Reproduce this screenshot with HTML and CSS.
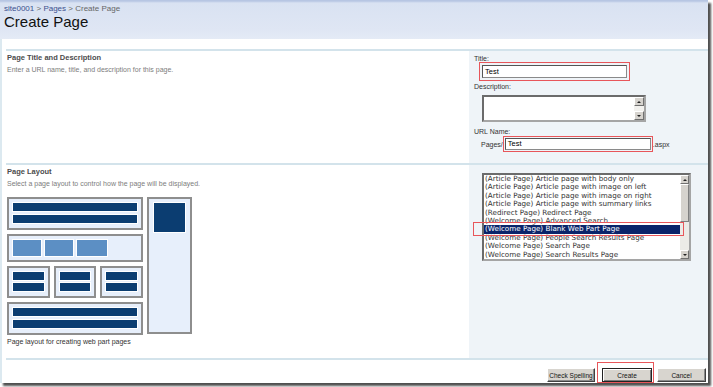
FILE: index.html
```html
<!DOCTYPE html>
<html lang="en">
<head>
    <meta charset="UTF-8">
    <title>Create Page</title>
    <link rel="stylesheet" href="styles.css">
</head>
<body>
    <div class="frame">
        <div class="header">
            <div class="crumbs"><a href="#">site0001</a> &gt; <a href="#">Pages</a> &gt; <span>Create Page</span></div>
            <h1>Create Page</h1>
        </div>

        <div class="main">
            <div class="section sec-title">
                <div class="sec-info">
                    <h2>Page Title and Description</h2>
                    <p>Enter a URL name, title, and description for this page.</p>
                </div>
                <div class="sec-fields">
                    <label class="fl">Title:</label>
                    <div class="redbox title-box"><div class="textbox">Test</div></div>

                    <label class="fl desc-label">Description:</label>
                    <div class="textarea">
                        <div class="ta-body"></div>
                        <div class="ta-scroll">
                            <span class="sbtn"><i class="arr up"></i></span>
                            <span class="sbtn"><i class="arr down"></i></span>
                        </div>
                    </div>

                    <label class="fl url-label">URL Name:</label>
                    <div class="url-row">
                        <span>Pages/</span>
                        <div class="redbox url-box"><div class="textbox small">Test</div></div>
                        <span>.aspx</span>
                    </div>
                </div>
            </div>

            <div class="section sec-layout">
                <div class="sec-info">
                    <h2>Page Layout</h2>
                    <p>Select a page layout to control how the page will be displayed.</p>

                    <div class="preview">
                        <div class="pv-main">
                            <div class="blk blk-a">
                                <div class="bar"></div>
                                <div class="bar"></div>
                            </div>
                            <div class="blk blk-b">
                                <div class="tile"></div>
                                <div class="tile"></div>
                                <div class="tile wide"></div>
                            </div>
                            <div class="blk-row">
                                <div class="blk small"><div class="bar"></div><div class="bar"></div></div>
                                <div class="blk small"><div class="bar"></div><div class="bar"></div></div>
                                <div class="blk small"><div class="bar"></div><div class="bar"></div></div>
                            </div>
                            <div class="blk blk-a">
                                <div class="bar"></div>
                                <div class="bar"></div>
                            </div>
                        </div>
                        <div class="blk pv-side">
                            <div class="square"></div>
                        </div>
                    </div>
                    <p class="caption">Page layout for creating web part pages</p>
                </div>
                <div class="sec-fields">
                    <div class="listwrap">
                        <div class="listbox">
                            <ul class="items">
                                <li>(Article Page) Article page with body only</li>
                                <li>(Article Page) Article page with image on left</li>
                                <li>(Article Page) Article page with image on right</li>
                                <li>(Article Page) Article page with summary links</li>
                                <li>(Redirect Page) Redirect Page</li>
                                <li>(Welcome Page) Advanced Search</li>
                                <li class="selected">(Welcome Page) Blank Web Part Page</li>
                                <li>(Welcome Page) People Search Results Page</li>
                                <li>(Welcome Page) Search Page</li>
                                <li>(Welcome Page) Search Results Page</li>
                            </ul>
                            <div class="lb-scroll">
                                <span class="sbtn"><i class="arr up"></i></span>
                                <span class="thumb"></span>
                                <span class="track"></span>
                                <span class="sbtn"><i class="arr down"></i></span>
                            </div>
                        </div>
                        <div class="mark"></div>
                    </div>
                </div>
            </div>

            <div class="actions">
                <button class="btn spell">Check Spelling</button>
                <div class="redbox create-box"><button class="btn default">Create</button></div>
                <button class="btn cancel">Cancel</button>
            </div>
        </div>
    </div>
</body>
</html>
```

FILE: styles.css
```css
:root {
    --line-color: #d3e3eb;
    --panel-color: #eff4f8;
    --mark-color: #e8565a;
    --navy: #0b3d71;
    --text-color: #333;
}

* {
    box-sizing: border-box;
    margin: 0;
    padding: 0;
}

body {
    font-family: 'Liberation Sans', Arial, sans-serif;
    background-color: #fff;
    width: 713px;
    height: 387px;
    overflow: hidden;
}

.frame {
    width: 708px;
    height: 383px;
    background-color: #fff;
    box-shadow: 3px 3px 2px #505050;
    display: flex;
    flex-direction: column;
}

/* header */
.header {
    height: 40px;
    padding: 4px 0 0 4px;
    background: linear-gradient(#b7c6e3 0, #b7c6e3 1px, #d9e2f2 3px, #dfe6f4 30px, #e5ebf6 40px);
}

.crumbs {
    font-size: 8px;
    line-height: 10px;
    color: #666;
}

.crumbs a {
    color: #3a4f8e;
    text-decoration: none;
}

.header h1 {
    font-size: 15px;
    line-height: 15px;
    font-weight: normal;
    color: #111;
}

/* content */
.main {
    flex: 1;
    display: flex;
    flex-direction: column;
    border-left: 2px solid #dce9f0;
    padding: 10px 0 0 4px;
}

.section {
    display: flex;
    border-top: 2px solid var(--line-color);
}

.sec-title {
    height: 114px;
}

.sec-layout {
    height: 195px;
}

.sec-info {
    width: 463px;
    padding: 2px 0 0 1px;
}

.sec-info h2 {
    font-size: 7.5px;
    line-height: 10px;
    font-weight: bold;
    color: #4c4c4c;
}

.sec-info p {
    font-size: 7px;
    line-height: 10px;
    margin-top: 2px;
    color: #7d7d7d;
}

.sec-fields {
    width: 239px;
    background-color: var(--panel-color);
    padding: 4px 0 0 5px;
}

.fl {
    display: block;
    font-size: 7px;
    line-height: 8px;
    color: var(--text-color);
}

.redbox {
    border: 1px solid var(--mark-color);
}

.title-box {
    width: 151px;
    padding: 2px;
    margin: -1px 0 0 5px;
}

.textbox {
    height: 13px;
    border: 1px solid #8a8a8a;
    border-top-color: #555;
    border-left-color: #555;
    background-color: #fff;
    font-size: 7.5px;
    line-height: 11px;
    padding-left: 2px;
    color: #000;
}

.textbox.small {
    height: 12px;
    line-height: 10px;
}

.desc-label {
    margin-top: 2px;
}

.textarea {
    display: flex;
    width: 164px;
    height: 27px;
    margin: 4px 0 0 8px;
    border: 2px solid;
    border-color: #6b6b6b #a5a5a5 #a5a5a5 #6b6b6b;
    background-color: #fff;
}

.ta-body {
    flex: 1;
}

.ta-scroll {
    width: 10px;
    display: flex;
    flex-direction: column;
    justify-content: space-between;
    background-color: #f2f1ee;
}

.sbtn {
    display: flex;
    align-items: center;
    justify-content: center;
    height: 9px;
    background-color: #d6d3ce;
    border: 1px solid;
    border-color: #fff #707070 #707070 #fff;
}

.arr {
    width: 0;
    height: 0;
    border-left: 2px solid transparent;
    border-right: 2px solid transparent;
}

.arr.up {
    border-bottom: 2px solid #222;
}

.arr.down {
    border-top: 2px solid #222;
}

.url-label {
    margin-top: 6px;
}

.url-row {
    display: flex;
    align-items: center;
    margin-left: 7px;
    font-size: 7px;
    color: var(--text-color);
}

.url-box {
    width: 150px;
    padding: 1px;
}

/* layout preview */
.preview {
    display: flex;
    gap: 4px;
    margin-top: 8px;
}

.pv-main {
    width: 136px;
    display: flex;
    flex-direction: column;
    gap: 4px;
}

.blk {
    border: 2px solid #8e8e8e;
    background-color: #e7effb;
    padding: 3px;
    display: flex;
    flex-direction: column;
    gap: 2px;
}

.blk-a {
    height: 33px;
}

.bar {
    height: 10px;
    background-color: var(--navy);
    border: 1px solid #fff;
}

.blk-b {
    height: 28px;
    flex-direction: row;
    gap: 2px;
}

.tile {
    width: 30px;
    height: 18px;
    background-color: #5c8fc4;
    border: 1px solid #fff;
}

.tile.wide {
    width: 32px;
}

.blk-row {
    display: flex;
    gap: 4px;
    height: 32px;
}

.blk.small {
    flex: 1;
    gap: 1px;
}

.pv-side {
    width: 45px;
    height: 137px;
    padding: 3px 4px;
}

.square {
    height: 31px;
    background-color: var(--navy);
    border: 1px solid #fff;
}

.sec-info p.caption {
    margin-top: 2px;
    color: var(--text-color);
}

/* listbox */
.listwrap {
    position: relative;
    margin: 4px 0 0 8px;
    width: 209px;
}

.listbox {
    display: flex;
    height: 88px;
    border: 2px solid;
    border-color: #6b6b6b #a5a5a5 #a5a5a5 #6b6b6b;
    background-color: #fff;
}

.items {
    flex: 1;
    list-style: none;
    font-family: 'DejaVu Sans', Verdana, sans-serif;
    font-size: 7.2px;
    line-height: 8.4px;
    color: #333;
    white-space: nowrap;
    overflow: hidden;
}

.items li {
    padding-left: 1px;
}

.items li.selected {
    background-color: #0a246a;
    color: #fff;
}

.lb-scroll {
    width: 9px;
    display: flex;
    flex-direction: column;
}

.lb-scroll .thumb {
    height: 38px;
    background-color: #d6d3ce;
    border: 1px solid;
    border-color: #fff #808080 #808080 #fff;
}

.lb-scroll .track {
    flex: 1;
    background-color: #ecebe7;
}

.mark {
    position: absolute;
    left: -9px;
    top: 49px;
    width: 211px;
    height: 14px;
    border: 1px solid var(--mark-color);
}

/* buttons */
.actions {
    flex: 1;
    display: flex;
    justify-content: flex-end;
    align-items: flex-start;
    border-top: 2px solid var(--line-color);
    padding: 2px 2px 0 0;
}

.btn {
    height: 14px;
    margin-top: 6px;
    font-family: 'Liberation Sans', Arial, sans-serif;
    font-size: 6.5px;
    color: #111;
    background-color: #d8d5cf;
    border: 1px solid;
    border-color: #fff #404040 #404040 #fff;
    box-shadow: inset -1px -1px #8a8a8a;
}

.spell {
    width: 48px;
}

.create-box {
    height: 21px;
    margin-left: 2px;
    padding: 0 1px 0 4px;
}

.create-box .btn {
    width: 50px;
    margin-top: 5px;
}

.btn.default {
    border-color: #222;
    box-shadow: inset 1px 1px #fff, inset -1px -1px #7a7a7a;
}

.cancel {
    width: 49px;
    margin-left: 3px;
}
```
